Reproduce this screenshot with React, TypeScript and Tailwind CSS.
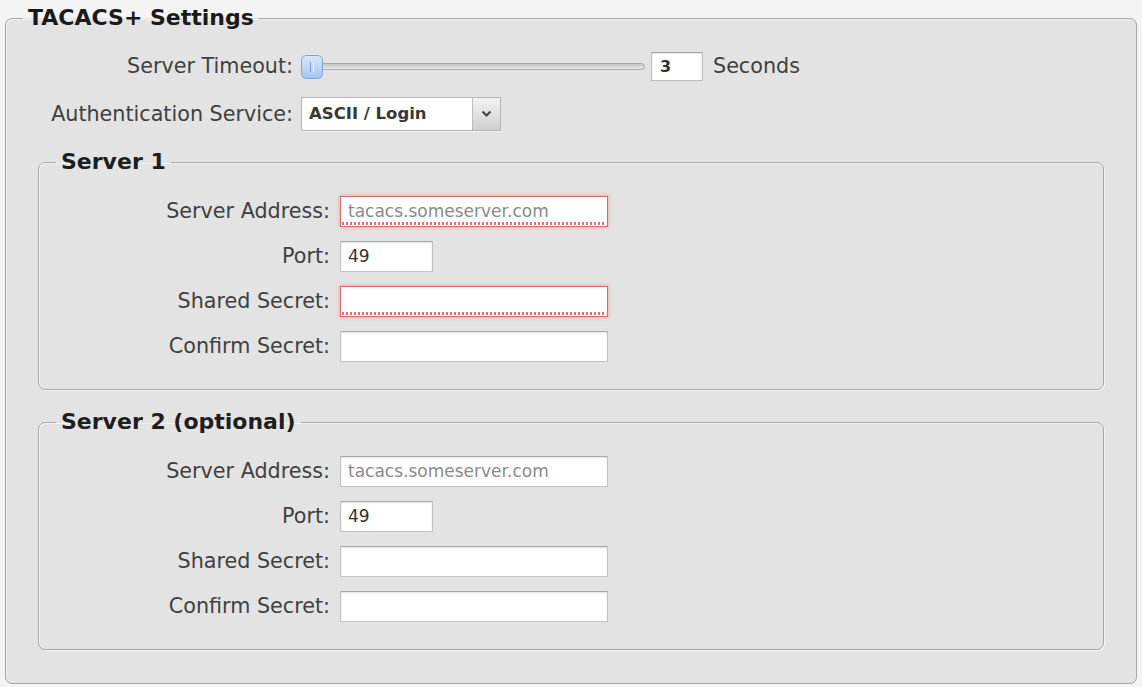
import React from "react";

const font = { fontFamily: '"DejaVu Sans", "Liberation Sans", sans-serif' };

function Label({ children, w }: { children: React.ReactNode; w: string }) {
  return (
    <div className={`${w} shrink-0 text-right text-[20.7px] text-[#404040] leading-none`}>{children}</div>
  );
}

function TextInput({
  value,
  placeholder,
  invalid,
  narrow,
}: {
  value?: string;
  placeholder?: string;
  invalid?: boolean;
  narrow?: boolean;
}) {
  return (
    <div
      className={`relative h-[31px] ${narrow ? "w-[93px]" : "w-[268px]"} bg-white border ${
        invalid
          ? "border-[#d9686a] shadow-[0_0_3px_1px_rgba(240,150,150,0.6)]"
          : "border-[#c2c2c2] border-t-[#a9a9a9] shadow-[inset_0_1px_2px_rgba(0,0,0,0.12)]"
      } flex items-center px-[7px] text-[17px] leading-none`}
    >
      {value ? (
        <span className="text-[#333]">{value}</span>
      ) : placeholder ? (
        <span className="text-[#8a8a8a]">{placeholder}</span>
      ) : null}
      {invalid && (
        <div className="absolute left-[1px] right-[1px] bottom-[1px] h-[3px] bg-[repeating-linear-gradient(90deg,#d94b4b_0_2px,transparent_2px_4px)] opacity-80" />
      )}
    </div>
  );
}

function Row({ label, children }: { label: string; children: React.ReactNode }) {
  return (
    <div className="flex items-center gap-[10px]">
      <Label w="w-[291px]">{label}</Label>
      {children}
    </div>
  );
}

function ServerBox({ title, invalid }: { title: string; invalid: boolean }) {
  return (
    <fieldset className="mx-[32px] border border-[#a8a8a8] rounded-[7px] shadow-[inset_1px_1px_0_#f2f2f2,1px_1px_0_#f4f4f4] pt-[21px] pb-[27px]">
      <legend className="ml-[17px] px-[5px] text-[22px] font-bold text-[#1e1e1e] leading-[26px]">{title}</legend>
      <div className="flex flex-col gap-[14px]">
        <Row label="Server Address:">
          <TextInput placeholder="tacacs.someserver.com" invalid={invalid} />
        </Row>
        <Row label="Port:">
          <TextInput value="49" narrow />
        </Row>
        <Row label="Shared Secret:">
          <TextInput invalid={invalid} />
        </Row>
        <Row label="Confirm Secret:">
          <TextInput />
        </Row>
      </div>
    </fieldset>
  );
}

export default function App() {
  return (
    <div className="w-[1142px] h-[687px] bg-[#f4f4f4] pt-[5px] pl-[5px] overflow-hidden" style={font}>
      <fieldset className="w-[1132px] h-[679px] border border-[#a5a5a5] rounded-[7px] bg-[#e3e3e3] shadow-[inset_1px_1px_0_#f0f0f0]">
        <legend className="ml-[17px] px-[5px] text-[22px] font-bold text-[#1a1a1a] leading-[26px]">TACACS+ Settings</legend>

        <div className="mt-[21px] flex items-center gap-[8px]">
          <Label w="w-[287px]">Server Timeout:</Label>
          <div className="relative w-[344px] h-[24px] flex items-center">
            <div className="absolute left-[12px] right-0 h-[7px] rounded-full border border-[#a9a9a9] bg-[linear-gradient(#c4c4c4,#e6e6e6)]" />
            <div className="relative w-[22px] h-[24px] rounded-[5px] border border-[#7ea6dc] bg-[linear-gradient(#d7e6fa,#a6c6ef)] flex items-center justify-center gap-[2px]">
              <div className="w-[1px] h-[10px] bg-[#7c9fcf]" />
              <div className="w-[1px] h-[10px] bg-[#f4f8ff]" />
            </div>
          </div>
          <div className="-ml-[2px] w-[52px] h-[29px] bg-white border border-[#bdbdbd] border-t-[#a5a5a5] shadow-[inset_0_1px_2px_rgba(0,0,0,0.12)] flex items-center px-[8px] text-[16px] font-bold text-[#333]">
            3
          </div>
          <div className="ml-[2px] text-[20.7px] text-[#404040] leading-none">Seconds</div>
        </div>

        <div className="mt-[16px] flex items-center gap-[8px]">
          <Label w="w-[287px]">Authentication Service:</Label>
          <div className="w-[200px] h-[34px] bg-white border border-[#b4b4b4] flex shadow-[0_1px_0_#f2f2f2]">
            <div className="flex-1 flex items-center pl-[7px] text-[16.5px] font-bold text-[#383838]">ASCII / Login</div>
            <div className="w-[28px] border-l border-[#bdbdbd] bg-[linear-gradient(#f3f3f3,#cfcfcf)] flex items-center justify-center">
              <svg width="11" height="8" viewBox="0 0 11 8">
                <path d="M1.5 1.5 L5.5 5.5 L9.5 1.5" fill="none" stroke="#444" strokeWidth="2.2" />
              </svg>
            </div>
          </div>
        </div>

        <div className="mt-[18px] flex flex-col gap-[19px]">
          <ServerBox title="Server 1" invalid />
          <ServerBox title="Server 2 (optional)" invalid={false} />
        </div>
      </fieldset>
    </div>
  );
}
